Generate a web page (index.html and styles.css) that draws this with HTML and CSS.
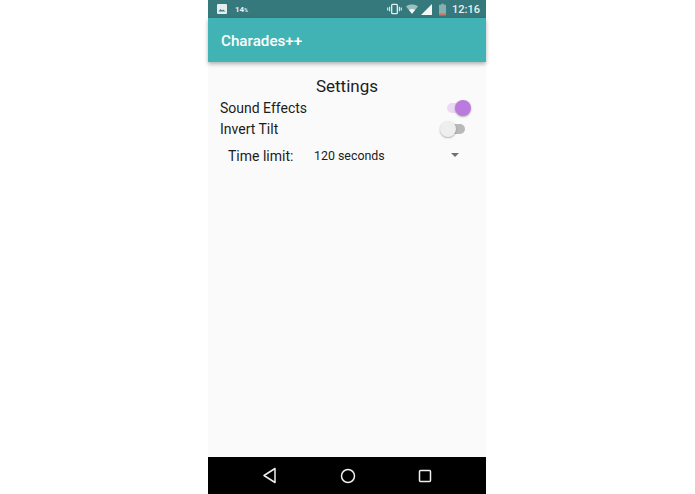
FILE: index.html
```html
<!DOCTYPE html>
<html lang="en">
<head>
    <meta charset="UTF-8">
    <title>Charades++</title>
    <link rel="stylesheet" href="styles.css">
</head>
<body>
    <main class="phone">
        <div class="status-bar">
            <div class="status-left">
                <svg class="icon-picture" width="12" height="12" viewBox="0 0 12 12">
                    <rect x="1" y="1" width="10" height="10" rx="1" fill="#e4eeee"/>
                    <path d="M2.5 8.5l2-2.5 1.5 1.5 1-1 2.5 2z" fill="#3a7d80"/>
                </svg>
                <span class="battery-text">14<small>%</small></span>
            </div>
            <div class="status-right">
                <svg width="15" height="12" viewBox="0 0 16 12">
                    <rect x="5" y="1" width="6" height="10" rx="1" fill="none" stroke="#e4eeee" stroke-width="1.4"/>
                    <path d="M2.8 3.5v5M13.2 3.5v5M.8 4.5v3M15.2 4.5v3" stroke="#e4eeee" stroke-width="1.2"/>
                </svg>
                <svg class="icon-wifi" width="12" height="10" viewBox="0 0 14 11">
                    <path d="M0 2.5C4 -.6 10 -.6 14 2.5L7 11z" fill="#9dbfc0"/>
                    <path d="M3.4 6.6C5.4 5.2 8.6 5.2 10.6 6.6L7 11z" fill="#f2f7f7"/>
                </svg>
                <svg class="icon-signal" width="11" height="11" viewBox="0 0 12 12">
                    <path d="M0 12L12 0v12z" fill="#f2f7f7"/>
                </svg>
                <svg class="icon-battery" width="7" height="13" viewBox="0 0 8 13">
                    <path d="M2.5 0h3v1H8v12H0V1h2.5z" fill="#8aaeaf"/>
                    <rect y="11" width="8" height="2" fill="#d0765a"/>
                </svg>
                <span class="clock">12:16</span>
            </div>
        </div>
        <header class="app-bar">Charades++</header>
        <section class="content">
            <h1 class="title">Settings</h1>
            <div class="row">
                <span>Sound Effects</span>
                <div class="switch on"><div class="knob"></div></div>
            </div>
            <div class="row">
                <span>Invert Tilt</span>
                <div class="switch off"><div class="knob"></div></div>
            </div>
            <div class="limit-row">
                <span class="limit-label">Time limit:</span>
                <span class="limit-value">120 seconds</span>
                <div class="arrow"></div>
            </div>
        </section>
        <nav class="nav-bar">
            <svg width="16" height="17" viewBox="0 0 16 17">
                <path d="M13 1.5v14L2 8.5z" fill="none" stroke="#eee" stroke-width="1.5" stroke-linejoin="round"/>
            </svg>
            <svg width="16" height="16" viewBox="0 0 16 16">
                <circle cx="8" cy="8" r="6.5" fill="none" stroke="#eee" stroke-width="1.5"/>
            </svg>
            <svg width="14" height="14" viewBox="0 0 14 14">
                <rect x="1.5" y="1.5" width="11" height="11" rx="1" fill="none" stroke="#eee" stroke-width="1.5"/>
            </svg>
        </nav>
    </main>
</body>
</html>
```

FILE: styles.css
```css
html, body {
    margin: 0;
    height: 100%;
    background-color: #fff;
}
body {
    display: flex;
    justify-content: flex-start;
    padding-left: 208px;
    box-sizing: border-box;
    font-family: Roboto, "Liberation Sans", sans-serif;
}
.phone {
    width: 278px;
    height: 494px;
    display: flex;
    flex-direction: column;
    background-color: #fafafa;
}
.status-bar {
    height: 18px;
    background-color: #35797c;
    display: flex;
    justify-content: space-between;
    align-items: center;
    padding: 0 6px 0 8px;
    flex-shrink: 0;
}
.status-left, .status-right {
    display: flex;
    align-items: center;
}
.status-left {
    gap: 7px;
}
.icon-picture {
    margin-top: -1px;
}
.battery-text {
    font-size: 8px;
    font-weight: 700;
    color: #e9f1f1;
}
.battery-text small {
    font-size: 5px;
}
.icon-wifi {
    margin-left: 4px;
}
.icon-signal {
    margin-left: 3px;
}
.icon-battery {
    margin-left: 7px;
}
.clock {
    margin-left: 6px;
    font-size: 11px;
    font-weight: 500;
    color: #e9f1f1;
}
.app-bar {
    height: 44px;
    flex-shrink: 0;
    background-color: #41b3b5;
    color: #fff;
    font-size: 15.2px;
    font-weight: 500;
    line-height: 46px;
    padding-left: 13px;
    box-shadow: 0 2px 4px rgba(0, 0, 0, .3);
}
.content {
    flex: 1;
    padding: 14px 15px 0 12px;
    color: #1c1c1c;
}
.title {
    margin: 0;
    font-size: 17px;
    font-weight: 400;
    line-height: 21px;
    text-align: center;
    padding-left: 3px;
}
.row {
    display: flex;
    justify-content: space-between;
    align-items: center;
    height: 21px;
    font-size: 14px;
}
.switch {
    position: relative;
    width: 19px;
    height: 10px;
    border-radius: 5px;
}
.switch.on {
    background-color: #ecd9f3;
    margin: 0 5px 0 0;
}
.switch.off {
    background-color: #b9b9b9;
    margin: 1px 6px 0 0;
}
.knob {
    position: absolute;
    top: -3px;
    width: 16px;
    height: 16px;
    border-radius: 50%;
    box-shadow: 0 1px 2px rgba(0, 0, 0, .3);
}
.switch.on .knob {
    right: -5px;
    background-color: #bb7ade;
}
.switch.off .knob {
    left: -6px;
    background-color: #eee;
}
.limit-row {
    display: flex;
    align-items: center;
    height: 22px;
    margin-top: 6px;
    padding-left: 8px;
}
.limit-label {
    width: 86px;
    font-size: 14px;
}
.limit-value {
    flex: 1;
    font-size: 12.4px;
    margin-top: -2px;
}
.arrow {
    width: 0;
    height: 0;
    margin: -2px 12px 0 0;
    border-left: 4px solid transparent;
    border-right: 4px solid transparent;
    border-top: 4px solid #707070;
}
.nav-bar {
    height: 37px;
    flex-shrink: 0;
    background-color: #000;
    display: flex;
    justify-content: center;
    align-items: center;
    gap: 62px;
    padding-right: 1px;
}
```
